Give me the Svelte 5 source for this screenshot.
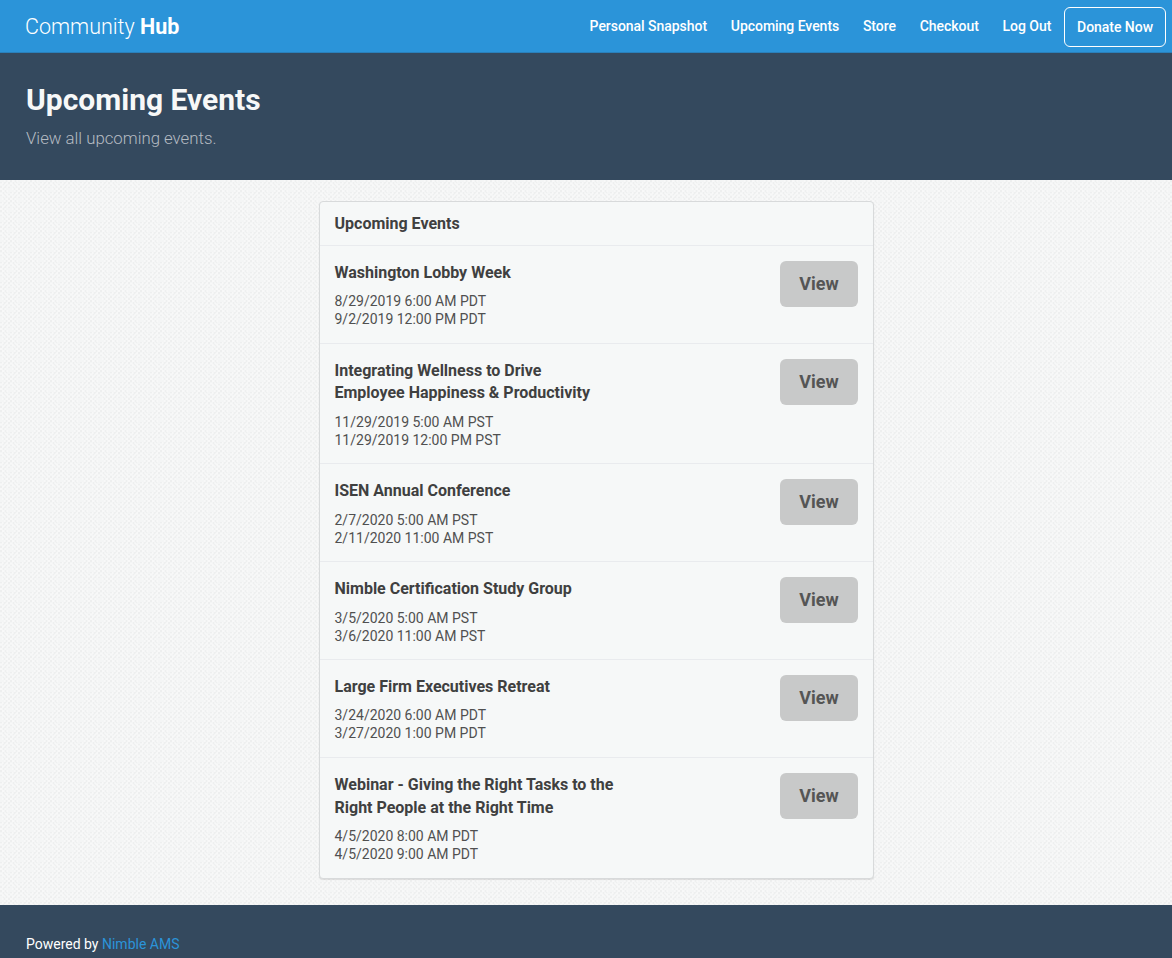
<script>
	const navLinks = ['Personal Snapshot', 'Upcoming Events', 'Store', 'Checkout', 'Log Out'];

	const events = [
		{ title: 'Washington Lobby Week', start: '8/29/2019 6:00 AM PDT', end: '9/2/2019 12:00 PM PDT' },
		{
			title: 'Integrating Wellness to Drive\nEmployee Happiness & Productivity',
			start: '11/29/2019 5:00 AM PST',
			end: '11/29/2019 12:00 PM PST'
		},
		{ title: 'ISEN Annual Conference', start: '2/7/2020 5:00 AM PST', end: '2/11/2020 11:00 AM PST' },
		{ title: 'Nimble Certification Study Group', start: '3/5/2020 5:00 AM PST', end: '3/6/2020 11:00 AM PST' },
		{ title: 'Large Firm Executives Retreat', start: '3/24/2020 6:00 AM PDT', end: '3/27/2020 1:00 PM PDT' },
		{
			title: 'Webinar - Giving the Right Tasks to the\nRight People at the Right Time',
			start: '4/5/2020 8:00 AM PDT',
			end: '4/5/2020 9:00 AM PDT'
		}
	];
</script>

<header class="topbar">
	<a class="brand" href="#top">Community <strong>Hub</strong></a>
	<nav>
		{#each navLinks as link}
			<a href="#top">{link}</a>
		{/each}
		<a class="donate" href="#top">Donate Now</a>
	</nav>
</header>

<section class="hero">
	<h1>Upcoming Events</h1>
	<p>View all upcoming events.</p>
</section>

<main>
	<div class="card">
		<h2>Upcoming Events</h2>
		{#each events as event}
			<div class="row">
				<div class="info">
					<h3>{event.title}</h3>
					<div class="dates">
						<div>{event.start}</div>
						<div>{event.end}</div>
					</div>
				</div>
				<button type="button">View</button>
			</div>
		{/each}
	</div>
</main>

<footer>
	Powered by <a href="#top">Nimble AMS</a>
</footer>

<style>
	:global(body) {
		font-family: Roboto, 'Liberation Sans', sans-serif;
		color: #3f4040;
		background: #f1f2f2;
	}

	a {
		text-decoration: none;
	}

	.topbar {
		display: flex;
		align-items: center;
		justify-content: space-between;
		height: 52px;
		padding: 0 6px 0 25px;
		background: #2b94d9;
		border-bottom: 1px solid #2a80bb;
	}

	.brand {
		font-size: 21.5px;
		font-weight: 300;
		color: #fff;
	}

	.brand strong {
		font-weight: 700;
	}

	nav {
		display: flex;
		align-items: center;
		gap: 23.75px;
		font-size: 14px;
		font-weight: 500;
		letter-spacing: -0.04px;
	}

	nav a {
		color: #fff;
	}

	nav .donate {
		margin: 2px 0 0 -11px;
		padding: 11px 12px;
		border: 1px solid #fff;
		border-radius: 6px;
		line-height: 16px;
	}

	.hero {
		height: 127px;
		box-sizing: border-box;
		padding: 29px 26px 0;
		background: #34495e;
		overflow: hidden;
	}

	h1 {
		margin: 0;
		font-size: 30px;
		line-height: 36px;
		font-weight: 700;
		color: #f7f8f8;
	}

	.hero p {
		margin: 10px 0 0;
		font-size: 16.8px;
		line-height: 20px;
		font-weight: 300;
		color: #b4bbc2;
	}

	main {
		padding: 21px 0 25.6px 319px;
		background:
			repeating-conic-gradient(rgba(255, 255, 255, 0.35) 0 25%, transparent 0 50%) 0 0 / 5px 5px,
			repeating-conic-gradient(#eeefef 0 25%, #f4f5f5 0 50%) 0 0 / 4px 4px;
	}

	.card {
		width: 553px;
		background: #f6f8f8;
		border: 1px solid #d8dadb;
		border-radius: 4px;
		box-shadow: 0 1px 1px rgba(0, 0, 0, 0.1);
	}

	h2 {
		margin: 0;
		padding: 0 14.5px;
		height: 43px;
		font-size: 16px;
		line-height: 43px;
		font-weight: 700;
		border-bottom: 1px solid #e9ebee;
	}

	/* row tops sit on fractions so the 22.5px title lines round like the reference */
	.row {
		display: flex;
		justify-content: space-between;
		align-items: flex-start;
		padding: 15px 15px 14.55px 14.5px;
		border-bottom: 1px solid #e9ebee;
	}

	.row:last-child {
		padding-bottom: 15.55px;
		border-bottom: 0;
	}

	h3 {
		margin: 0 0 7.75px;
		padding-top: 1.1px;
		font-size: 16px;
		line-height: 22.5px;
		font-weight: 700;
		white-space: pre-line;
	}

	.dates {
		font-size: 14px;
		line-height: 18px;
		color: #505050;
	}

	button {
		width: 78px;
		height: 46px;
		border: 0;
		border-radius: 6px;
		background: #c8c9c9;
		color: #555;
		font-family: inherit;
		font-size: 18px;
		font-weight: 700;
		padding: 0 0 1.4px;
	}

	footer {
		padding: 30px 26px;
		background: #34495e;
		color: #fff;
		font-size: 14px;
		line-height: 18px;
	}

	footer a {
		color: #2b94d9;
	}
</style>
